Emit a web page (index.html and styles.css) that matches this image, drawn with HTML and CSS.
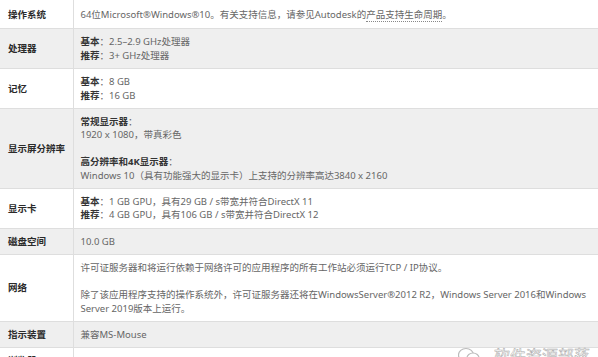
FILE: index.html
```html
<!DOCTYPE html>
<html lang="zh">
<head>
<meta charset="utf-8">
<link rel="stylesheet" href="styles.css">
</head>
<body>
<div class="page">
  <table class="spec">
    <colgroup><col class="c-label"><col class="c-value"></colgroup>
    <tr class="first">
      <th>操作系统</th>
      <td>64位Microsoft®Windows®10。有关支持信息，请参见Autodesk的<span class="link">产品支持生命周期</span>。</td>
    </tr>
    <tr class="alt">
      <th>处理器</th>
      <td><b>基本</b>：2.5–2.9 GHz处理器<br><b>推荐</b>：3+ GHz处理器</td>
    </tr>
    <tr>
      <th>记忆</th>
      <td><b>基本</b>：8 GB<br><b>推荐</b>：16 GB</td>
    </tr>
    <tr class="alt">
      <th>显示屏分辨率</th>
      <td><b>常规显示器</b>：<br>1920 x 1080，带真彩色<br><br><b>高分辨率和4K显示器</b>：<br>Windows 10（具有功能强大的显示卡）上支持的分辨率高达3840 x 2160</td>
    </tr>
    <tr>
      <th>显示卡</th>
      <td><b>基本</b>：1 GB GPU，具有29 GB / s带宽并符合DirectX 11<br><b>推荐</b>：4 GB GPU，具有106 GB / s带宽并符合DirectX 12</td>
    </tr>
    <tr class="alt">
      <th>磁盘空间</th>
      <td>10.0 GB</td>
    </tr>
    <tr>
      <th>网络</th>
      <td><span class="wrap">许可证服务器和将运行依赖于网络许可的应用程序的所有工作站必须运行TCP / IP协议。<br><br>除了该应用程序支持的操作系统外，许可证服务器还将在WindowsServer®2012 R2，Windows Server 2016和Windows Server 2019版本上运行。</span></td>
    </tr>
    <tr class="alt">
      <th>指示装置</th>
      <td>兼容MS-Mouse</td>
    </tr>
    <tr>
      <th>浏览器</th>
      <td></td>
    </tr>
  </table>
  <div class="watermark">
    <svg class="wm-icon" width="22" height="18" viewBox="0 0 22 18"><ellipse cx="8" cy="8" rx="7.5" ry="6.5" fill="none" stroke="#bbb" stroke-width="1.2"/><ellipse cx="15" cy="11" rx="6" ry="5" fill="#fff" stroke="#bbb" stroke-width="1.2"/></svg>
    <span>软件资源部落</span>
  </div>
</div>
</body>
</html>
```

FILE: styles.css
```css
html, body {
  margin: 0;
  padding: 0;
  background: #fff;
}
.page {
  position: relative;
  width: 598px;
  height: 357px;
  overflow: hidden;
  font-family: "Noto Sans", "Noto Sans CJK SC", sans-serif;
  font-size: 9.5px;
  line-height: 13.4px;
  color: #666;
}
.spec {
  width: 100%;
  border-collapse: collapse;
  table-layout: fixed;
}
.c-label {
  width: 73px;
}
.spec th, .spec td {
  border-bottom: 1px solid #dedede;
  padding: 6px 8px;
  vertical-align: middle;
  text-align: left;
}
.spec th {
  border-right: 1px solid #dedede;
  font-weight: bold;
  color: #2a2a2a;
  white-space: nowrap;
  overflow: hidden;
}
.spec td {
  padding-left: 7px;
}
.spec td b {
  color: #333;
}
.wrap {
  display: block;
  max-width: 512px;
}
.spec tr.first th, .spec tr.first td {
  padding-top: 8px;
  padding-bottom: 7px;
}
.spec tr.alt {
  background: #efefef;
}
.link {
  border-bottom: 1px dotted #888;
}
.watermark {
  position: absolute;
  left: 458px;
  top: 347px;
  display: flex;
  align-items: center;
  gap: 14px;
  font-family: "Noto Sans CJK SC", sans-serif;
  font-size: 16px;
  color: #fff;
  -webkit-text-stroke: 0.5px #aaa;
}
.wm-icon {
  flex: none;
}
```
